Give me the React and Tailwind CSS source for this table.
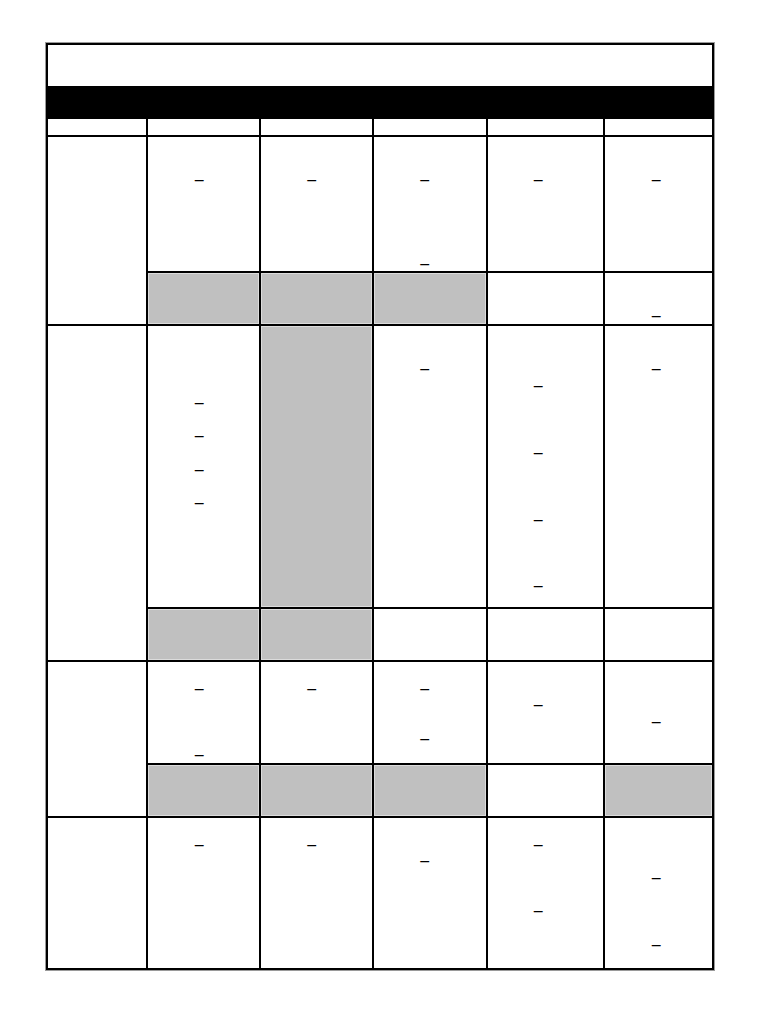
import React from "react";

const G = "gray";

const cells = [
  { pos: "col-start-1 row-start-4 row-span-2", c: [] },
  { pos: "col-start-1 row-start-6 row-span-2", c: [] },
  { pos: "col-start-1 row-start-8 row-span-2", c: [] },
  { pos: "col-start-1 row-start-10", c: [] },

  { pos: "col-start-2 row-start-4", col: 2, c: [2] },
  { pos: "col-start-3 row-start-4", col: 3, c: [2] },
  { pos: "col-start-4 row-start-4", col: 4, c: [2, 7] },
  { pos: "col-start-5 row-start-4", col: 5, c: [2] },
  { pos: "col-start-6 row-start-4", col: 6, c: [2] },
  { pos: "col-start-2 row-start-5", col: 2, c: G },
  { pos: "col-start-3 row-start-5", col: 3, c: G },
  { pos: "col-start-4 row-start-5", col: 4, c: G },
  { pos: "col-start-5 row-start-5", col: 5, c: [] },
  { pos: "col-start-6 row-start-5", col: 6, c: [2] },

  { pos: "col-start-2 row-start-6", col: 2, c: [4, 6, 8, 10] },
  { pos: "col-start-3 row-start-6", col: 3, c: G },
  { pos: "col-start-4 row-start-6", col: 4, c: [2] },
  { pos: "col-start-5 row-start-6", col: 5, c: [3, 7, 11, 15] },
  { pos: "col-start-6 row-start-6", col: 6, c: [2] },
  { pos: "col-start-2 row-start-7", col: 2, c: G },
  { pos: "col-start-3 row-start-7", col: 3, c: G },
  { pos: "col-start-4 row-start-7", col: 4, c: [] },
  { pos: "col-start-5 row-start-7", col: 5, c: [] },
  { pos: "col-start-6 row-start-7", col: 6, c: [] },

  { pos: "col-start-2 row-start-8", col: 2, c: [1, 5] },
  { pos: "col-start-3 row-start-8", col: 3, c: [1] },
  { pos: "col-start-4 row-start-8", col: 4, c: [1, 4] },
  { pos: "col-start-5 row-start-8", col: 5, c: [2] },
  { pos: "col-start-6 row-start-8", col: 6, c: [3] },
  { pos: "col-start-2 row-start-9", col: 2, c: G },
  { pos: "col-start-3 row-start-9", col: 3, c: G },
  { pos: "col-start-4 row-start-9", col: 4, c: G },
  { pos: "col-start-5 row-start-9", col: 5, c: [] },
  { pos: "col-start-6 row-start-9", col: 6, c: G },

  { pos: "col-start-2 row-start-10", col: 2, c: [1] },
  { pos: "col-start-3 row-start-10", col: 3, c: [1] },
  { pos: "col-start-4 row-start-10", col: 4, c: [2] },
  { pos: "col-start-5 row-start-10", col: 5, c: [1, 5] },
  { pos: "col-start-6 row-start-10", col: 6, c: [3, 7] },
];

const padByCol = {
  2: "pr-[4px]",
  3: "pr-[5px]",
  4: "pr-[6px]",
  5: "pr-[10px]",
  6: "pr-0",
};

function Cell({ pos, col, c }) {
  if (c === G) {
    return (
      <div
        className={`${pos} bg-[#c0c0c0] shadow-[inset_0_0_0_1px_#dcdcdc]`}
      />
    );
  }
  const count = c.length ? Math.max(...c) + 1 : 0;
  const lines = Array.from({ length: count }, (_, i) => c.includes(i));
  return (
    <div className={`${pos} bg-white flex flex-col pt-[2px] text-center ${padByCol[col] || ""}`}>
      {lines.map((isDash, i) => (
        <div key={i} className="h-[16.7px] leading-[16.7px]">
          {isDash ? "\u2013\u00a0" : "\u00a0"}
        </div>
      ))}
    </div>
  );
}

export default function App() {
  return (
    <div className="min-h-[1024px] w-[768px] bg-white pt-[42px] pl-[45px] font-['Liberation_Sans',Arial,sans-serif] text-[16px] text-black">
      <div className="w-[670px] border border-[#9a9a9a]">
        <div className="grid grid-cols-[98px_111px_111px_112px_115px_107px] grid-rows-[41px_29px_16px_134px_51px_281px_51px_101px_51px_150px] gap-[2px] bg-black p-[2px]">
          <div className="col-span-6 row-start-1 bg-white" />
          <div className="col-span-6 row-start-2 bg-black" />
          <div className="col-start-1 row-start-3 bg-white" />
          <div className="col-start-2 row-start-3 bg-white" />
          <div className="col-start-3 row-start-3 bg-white" />
          <div className="col-start-4 row-start-3 bg-white" />
          <div className="col-start-5 row-start-3 bg-white" />
          <div className="col-start-6 row-start-3 bg-white" />
          {cells.map((cell, i) => (
            <Cell key={i} {...cell} />
          ))}
        </div>
      </div>
    </div>
  );
}
